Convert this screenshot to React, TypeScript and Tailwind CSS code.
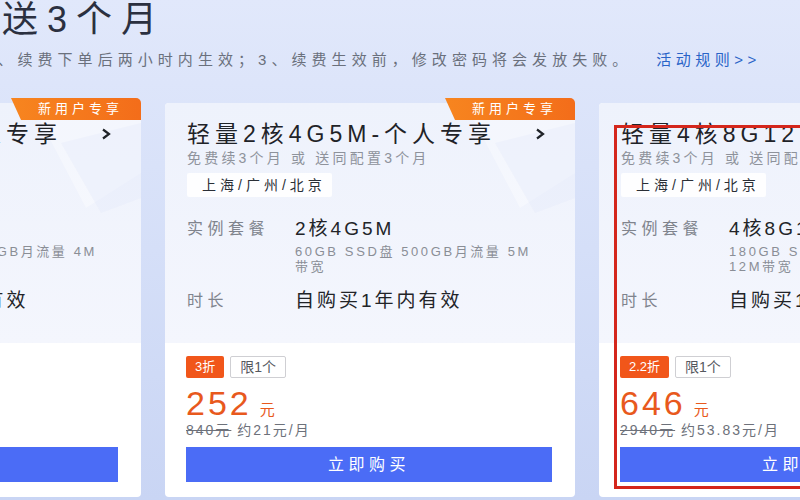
import React from 'react';

type Plan = {
  title: string;
  spec: string;
  detail: string;
  discount: string;
  price: string;
  orig: string;
  monthly: string;
  marked?: boolean;
};

const plans: Plan[] = [
  {
    title: '轻量2核2G4M-个人专享',
    spec: '2核2G4M',
    detail: '50GB SSD盘 300GB月流量 4M带宽',
    discount: '3折',
    price: '168',
    orig: '560元',
    monthly: '约14元/月',
  },
  {
    title: '轻量2核4G5M-个人专享',
    spec: '2核4G5M',
    detail: '60GB SSD盘 500GB月流量 5M带宽',
    discount: '3折',
    price: '252',
    orig: '840元',
    monthly: '约21元/月',
  },
  {
    title: '轻量4核8G12M-个人专享',
    spec: '4核8G12M',
    detail: '180GB SSD盘 2000GB月流量 12M带宽',
    discount: '2.2折',
    price: '646',
    orig: '2940元',
    monthly: '约53.83元/月',
    marked: true,
  },
];

const PlanCard = ({ plan }: { plan: Plan }) => (
  <div className="relative w-[410px] h-[394px] shrink-0 rounded-[4px] bg-white flex flex-col">
    {/* badge */}
    <div className="absolute -top-[5px] right-0 z-10 w-[130px] h-[22px] rounded-tr-[5px] bg-gradient-to-r from-[#f7851f] to-[#f36d1a] [clip-path:polygon(0_0,100%_0,100%_100%,10px_100%)] flex items-center pl-[27px] text-[13px] tracking-[4px] leading-[22px] text-white">
      新用户专享
    </div>

    <div className="relative overflow-hidden rounded-t-[4px] h-[240px] bg-gradient-to-b from-[#eef2fc] to-[#f4f6fd] px-[22px] pt-[16px]">
      <svg className="absolute right-0 top-0" width="150" height="120" viewBox="0 0 150 120">
        <polygon points="40,0 150,0 150,70 95,105" fill="#ffffff" opacity="0.35" />
        <polygon points="70,40 150,20 150,95 110,110" fill="#e2e8f8" opacity="0.35" />
      </svg>

      <div className="relative flex items-center justify-between h-[30px]">
        <span className="text-[23px] tracking-[5px] leading-[30px] text-[#1f2328] whitespace-nowrap">{plan.title}</span>
        <svg className="mr-[8px] shrink-0" width="10" height="12" viewBox="0 0 10 12">
          <polyline points="2,1.5 8,6 2,10.5" fill="none" stroke="#1f2328" strokeWidth="2.2" />
        </svg>
      </div>
      <div className="relative text-[14px] tracking-[3.2px] leading-[18px] text-[#8e929b] whitespace-nowrap">免费续3个月 或 送同配置3个月</div>
      <div className="relative mt-[6px] w-[145px] h-[24px] bg-white/90 rounded-[2px] pl-[15px] text-[14px] tracking-[4px] leading-[24px] text-[#2b2f36] whitespace-nowrap">
        上海/广州/北京
      </div>

      <div className="relative mt-[20px] flex">
        <span className="w-[108px] shrink-0 text-[16px] tracking-[4.5px] leading-[24px] text-[#80848d]">实例套餐</span>
        <div className="w-[240px]">
          <div className="text-[19px] tracking-[3px] leading-[24px] text-[#222428] whitespace-nowrap">{plan.spec}</div>
          <div className="mt-[3px] text-[13px] tracking-[2.6px] leading-[15px] text-[#8a8e96]">{plan.detail}</div>
        </div>
      </div>
      <div className="relative mt-[15px] flex">
        <span className="w-[108px] shrink-0 text-[16px] tracking-[4.5px] leading-[24px] text-[#80848d]">时长</span>
        <span className="text-[19px] tracking-[3px] leading-[24px] text-[#222428] whitespace-nowrap">自购买1年内有效</span>
      </div>
    </div>

    <div className="flex-1 px-[21px] pt-[13px]">
      <div className="flex gap-[6px]">
        <span className="h-[22px] px-[9px] rounded-[2px] bg-[#f1561a] text-[13px] leading-[22px] text-white">{plan.discount}</span>
        <span className="h-[22px] px-[9px] rounded-[2px] border border-[#cfcfd3] bg-white text-[14px] leading-[20px] text-[#55585e]">限1个</span>
      </div>
      <div className="mt-[7px] flex items-baseline h-[36px]">
        <span className="text-[34px] tracking-[3px] leading-[36px] text-[#e8591d]">{plan.price}</span>
        <span className="ml-[8px] text-[15px] text-[#e8591d]">元</span>
      </div>
      <div className="text-[14px] tracking-[2px] leading-[18px] text-[#6d717a] whitespace-nowrap">
        <span className="line-through">{plan.orig}</span> {plan.monthly}
      </div>
      <button className="mt-[8px] w-[366px] h-[35px] bg-[#4b6cf6] text-white text-[16px] tracking-[4.5px] leading-[35px]">
        立即购买
      </button>
    </div>

    {plan.marked && (
      <div className="absolute left-[15px] top-[22px] w-[380px] h-[364px] border-[3px] border-[#d4261c] pointer-events-none" />
    )}
  </div>
);

export default function App() {
  return (
    <div className="w-[800px] h-[500px] overflow-hidden bg-gradient-to-b from-[#e1e8fb] via-[#d5dff8] to-[#c9d5f4] [font-family:'Liberation_Sans','Noto_Sans_CJK_SC',sans-serif]">
      <h1 className="-ml-[43px] h-[40px] text-[36px] tracking-[9px] leading-[40px] text-[#2b3040] whitespace-nowrap">
        赠送3个月
      </h1>
      <div className="mt-[10px] -ml-[16px] flex items-center whitespace-nowrap leading-[20px]">
        <span className="text-[15px] tracking-[5.05px] text-[#6a707c]">2、续费下单后两小时内生效；3、续费生效前，修改密码将会发放失败。</span>
        <span className="ml-[24px] text-[15px] tracking-[4.5px] text-[#2a64c8]">活动规则&gt;&gt;</span>
      </div>
      <div className="mt-[33px] -ml-[269px] flex gap-[24px]">
        {plans.map((p) => (
          <PlanCard key={p.title} plan={p} />
        ))}
      </div>
    </div>
  );
}
